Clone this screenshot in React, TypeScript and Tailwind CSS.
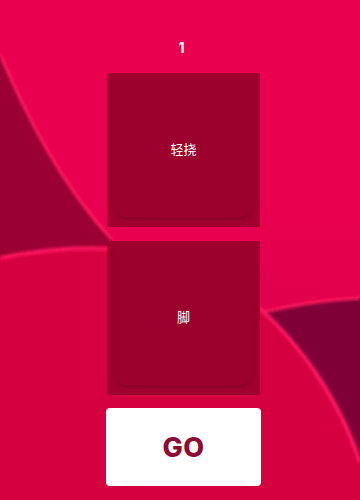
import React from "react";

function Background() {
  return (
    <svg
      className="absolute inset-0 h-full w-full"
      viewBox="0 0 360 500"
      preserveAspectRatio="none"
    >
      <defs>
        <filter id="blur1" x="-20%" y="-20%" width="140%" height="140%">
          <feGaussianBlur stdDeviation="1.6" />
        </filter>
        <linearGradient id="band" x1="0" y1="0" x2="0" y2="1">
          <stop offset="0" stopColor="#e9004f" />
          <stop offset="1" stopColor="#df004b" />
        </linearGradient>
      </defs>
      <rect x="0" y="0" width="360" height="500" fill="#e9004f" />
      {/* left dark region */}
      <path d="M0,54 C28,120 62,185 112,240 L112,270 L0,270 Z" fill="#9a0034" />
      <path
        d="M0,54 C28,120 62,185 112,240"
        fill="none"
        stroke="#ff1a62"
        strokeWidth="3"
        filter="url(#blur1)"
      />
      {/* upper right band */}
      <path d="M240,200 L360,200 L360,298 C320,300 285,306 240,318 Z" fill="url(#band)" />
      {/* right dark region */}
      <path d="M240,318 C285,306 320,300 360,298 L360,500 L240,500 Z" fill="#7e0036" />
      <path
        d="M240,318 C285,306 320,300 360,298"
        fill="none"
        stroke="#ff1a62"
        strokeWidth="3"
        filter="url(#blur1)"
      />
      {/* bottom big region */}
      <path
        d="M0,258 C70,244 170,238 240,292 C300,338 340,402 360,462 L360,500 L0,500 Z"
        fill="#d5003f"
      />
      <path
        d="M0,258 C70,244 170,238 240,292 C300,338 340,402 360,462"
        fill="none"
        stroke="#ff1760"
        strokeWidth="4"
        filter="url(#blur1)"
      />
    </svg>
  );
}

function Key({ label }: { label: string }) {
  return (
    <div className="relative flex h-[154px] w-[153px] flex-col bg-[#a0002e] p-[6px] pb-[10px]">
      <div className="flex flex-1 items-center justify-center rounded-b-[14px] bg-[#9c002c] shadow-[0_2px_3px_rgba(80,0,20,0.3)]">
        <span
          className="text-[13px] leading-none text-white"
          style={{ fontFamily: '"Noto Sans CJK SC", "Noto Sans", sans-serif' }}
        >
          {label}
        </span>
      </div>
    </div>
  );
}

export default function App() {
  return (
    <div className="relative h-[500px] w-[360px] overflow-hidden">
      <Background />
      <div
        className="relative flex flex-col items-center pl-[7px] pt-[38px]"
        style={{ fontFamily: '"Inter", "Noto Sans", sans-serif' }}
      >
        <div className="h-[20px] pr-[4px] text-[14px] font-bold leading-[20px] text-white">1</div>
        <div className="mt-[15px] flex flex-col gap-[14px]">
          <Key label="轻挠" />
          <Key label="脚" />
        </div>
        <div className="mt-[13px] flex h-[78px] w-[155px] items-center justify-center rounded-[4px] bg-white">
          <span className="text-[27px] font-extrabold leading-none tracking-[0.5px] text-[#8e0b33]">GO</span>
        </div>
      </div>
    </div>
  );
}
